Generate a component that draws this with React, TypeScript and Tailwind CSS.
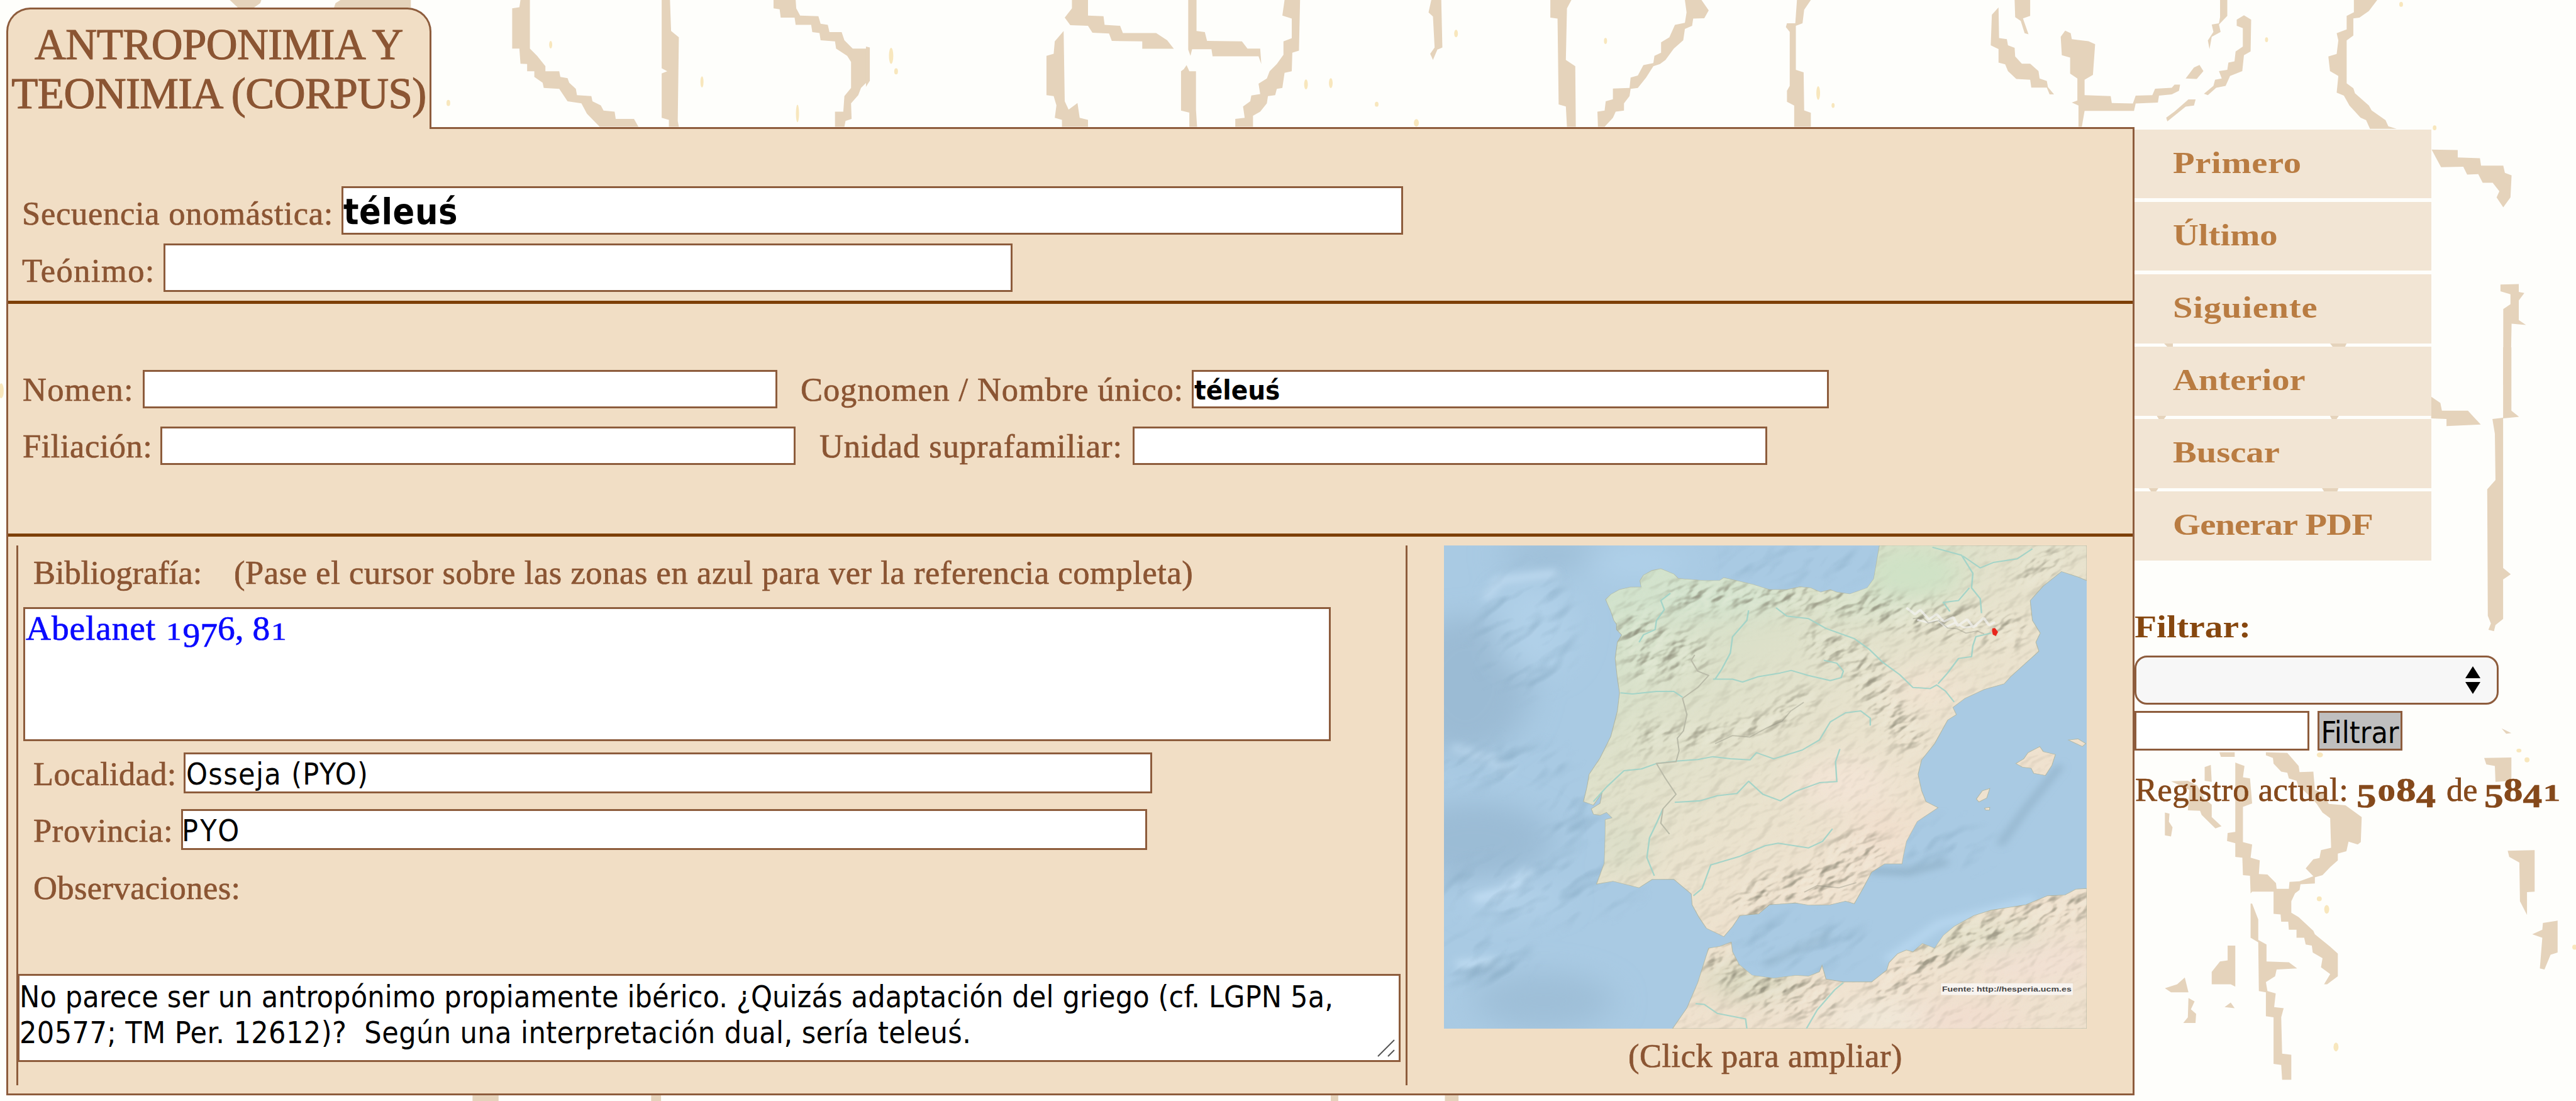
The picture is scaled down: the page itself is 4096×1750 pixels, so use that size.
import React from "react";

const STROKE = "#e5d3bb";

const upperLeft = [
  "415,0 472,0 470,15 458,38 430,38",
  "603,38 606,15 615,0 742,0 742,38",
  "940,0 957,0 957,235 970,270 985,320 985,345 1010,345 1012,372 1025,378 1028,400 1040,430 1042,460 1068,465 1070,490 1085,510 1090,535 1110,540 1112,575 1145,575 1153,613 1083,613 1060,550 1050,500 1025,490 1010,430 982,425 980,400 965,372 965,345 952,345 952,310 940,308 938,235 925,235 925,40 938,35",
  "1195,0 1210,0 1212,150 1226,180 1224,585 1226,613 1208,613 1208,580 1195,570 1195,355 1205,345 1195,330",
  "1397,0 1437,0 1438,40 1445,75 1478,78 1482,115 1495,120 1498,155 1520,155 1525,195 1540,235 1568,235 1568,390 1555,425 1550,460 1537,500 1538,575 1527,585 1525,613 1508,613 1508,540 1523,540 1525,465 1537,425 1537,300 1530,270 1510,235 1508,200 1482,195 1480,160 1467,155 1465,120 1437,120 1435,85 1410,85 1408,45 1397,40",
];
const upperMiddle = [
  "-4,225 3,230 3,390 -4,420",
  "368,0 397,0 397,75 425,78 427,120 455,125 460,160 520,160 540,195 552,236 495,236 495,200 440,198 435,162 405,158 397,125 365,122 355,85 368,40",
  "353,150 355,490 362,530 378,498 382,570 397,580 397,613 350,613 350,580 337,570 340,510 335,465 322,460 322,270 335,260 337,200",
  "578,0 593,0 593,150 608,155 612,198 675,200 685,235 708,235 710,310 705,272 622,272 620,238 585,238 582,270 578,240",
  "570,335 575,315 580,345 592,345 592,530 594,613 580,613 580,545 565,535 565,345",
  "752,0 780,0 778,245 766,255 765,345 752,352 748,425 738,430 735,460 722,465 720,500 708,540 695,560 695,613 663,613 663,575 680,570 677,515 690,490 692,462 708,455 705,405 720,380 725,345 738,310 750,265 750,200 765,185 765,90 748,75",
  "1017,0 1035,0 1037,230 1028,240 1020,290 1015,260 1023,230 1020,80 1012,60",
  "1232,0 1270,0 1262,40 1260,290 1277,320 1278,613 1262,613 1260,515 1247,505 1245,90 1232,85",
  "1475,0 1505,0 1518,50 1510,88 1490,90 1488,125 1475,140 1472,195 1455,235 1440,290 1430,310 1418,320 1405,375 1390,425 1377,430 1375,465 1365,500 1365,535 1350,540 1345,570 1330,613 1318,613 1317,540 1330,535 1332,490 1345,480 1345,428 1375,425 1377,375 1390,365 1400,315 1418,305 1420,270 1432,255 1432,205 1447,180 1457,120 1475,110 1478,60",
];
const upperRight = [
  "165,0 190,0 178,40 175,95 163,105 163,285 177,295 178,450 190,460 190,517 160,517 160,430 147,415 147,370 152,350 152,130 145,110 147,95 162,95",
  "557,0 585,0 585,65 572,75 582,140 575,135 568,85 558,70",
  "528,30 529,155 543,160 545,185 557,195 558,230 570,260 585,260 600,290 602,320 615,330 617,355 628,385 620,385 615,357 587,357 585,325 560,322 545,290 540,262 528,255 528,200 514,185 516,60",
  "640,150 648,125 658,135 660,160 690,168 702,180 698,305 683,325 683,388 730,392 732,420 770,422 775,390 805,388 810,362 840,358 845,345 855,345 853,370 840,385 817,390 815,418 775,422 772,452 683,452 678,517 672,517 672,430 660,418 670,410 670,320 657,300 657,235 642,225",
  "865,320 880,275 890,265 897,290 885,322",
  "927,0 940,0 940,65 925,100 928,130 912,150 908,200 905,165 915,130 912,100 925,95 927,70",
  "957,80 970,62 983,80 982,210 970,225 967,290 945,310 937,350 920,358 905,388 898,382 915,350 918,325 930,320 925,290 940,285 942,255 953,250 955,210 968,190 968,115 957,105",
  "830,480 845,455 860,425 870,405 883,405 880,430 865,435 832,495",
  "1168,0 1210,0 1195,45 1178,72 1167,75 1167,145 1155,165 1155,340 1167,360 1170,380 1195,430 1200,450 1225,490 1230,515 1245,525 1197,525 1190,490 1180,480 1160,430 1150,390 1137,378 1140,310 1125,290 1122,230 1137,220 1140,165 1137,135 1155,120 1155,65 1168,50",
  "1308,610 1355,612 1355,642 1395,645 1397,675 1437,675 1440,705 1452,715 1450,805 1437,845 1425,805 1430,780 1418,745 1400,745 1392,710 1372,712 1365,680 1325,682",
  "1432,1160 1465,1158 1465,1190 1475,1195 1465,1225 1465,1305 1478,1325 1452,1320 1450,1568 1437,1568 1437,1260 1450,1240 1450,1200 1432,1188",
  "826,1400 842,1400 842,1414 832,1414",
  "1125,1400 1155,1400 1152,1414 1130,1414",
];
const middleRight = [
  "1330,0 1357,0 1357,205 1382,225 1330,230 1330,715 1355,735 1330,752 1330,880 1305,900 1300,920 1282,915 1290,895 1280,870 1278,460 1305,430 1303,280 1295,232 1330,228",
  "1095,160 1125,180 1130,205 1215,205 1240,232 1257,250 1145,255 1145,232 1095,230",
  "198,221 230,221 222,232 205,232",
  "764,221 794,221 786,232 770,232",
  "172,456 204,456 196,467 180,467",
  "738,456 792,456 788,467 745,467",
  "1325,1235 1357,1250 1340,1252",
];
const lowerRight = [
  "403,35 453,35 453,55 408,55",
  "555,35 625,38 662,95 665,122 710,120 715,200 745,215 760,262 815,268 868,320 865,430 855,440 825,428 818,470 790,480 790,510 765,540 740,575 715,585 715,612 668,615 665,640 650,655 638,690 638,740 662,760 710,820 715,835 765,890 790,920 790,1020 755,1055 745,1055 765,1010 735,980 740,940 708,915 705,885 685,880 680,850 655,850 655,815 630,815 628,780 605,780 603,748 580,745 580,648 510,648 505,655 503,578 480,575 478,498 455,495 455,435 428,425 430,390 455,385 455,80 485,95 480,145 503,150 510,260 480,275 480,430 510,440 505,498 535,510 532,570 560,572 588,610 590,635 630,635 632,605 665,602 710,580 685,545 710,505 730,500 735,465 768,455 765,325 740,300 720,260 700,230 660,180 655,160 630,150 625,125 605,120 580,85 578,60 555,48",
  "510,700 530,770 530,860 557,880 557,955 630,958 657,985 590,990 585,1020 555,1045 560,1085 587,1095 582,1155 613,1160 605,1200 608,1360 638,1365 638,1475 608,1475 605,1410 580,1405 580,1200 555,1195 555,1090 532,1085 530,870 505,850 505,700",
  "430,885 455,885 455,1065 440,1055 378,1055 378,1000 405,955 430,950",
  "225,1072 265,1055 290,1025 302,1090 245,1090",
  "302,1115 322,1130 310,1165 327,1185 325,1225 285,1225 300,1200",
  "420,1155 440,1135 453,1160",
  "225,300 240,305 238,340 250,365 245,405 225,400",
  "355,100 375,90 378,165 355,160",
  "245,162 300,160 330,180 355,240 378,265 378,320 410,360 390,370 345,310 340,292 300,290 305,200",
  "1268,60 1357,58 1357,160 1305,165 1303,95 1275,88",
  "1345,468 1433,465 1433,648 1408,650 1408,750 1385,690 1383,520 1350,495",
  "1508,775 1508,915 1485,925 1465,990 1450,985 1458,850 1425,835 1458,815 1460,785",
];

function Strokes({ shapes, transform }: { shapes: string[]; transform: string }) {
  return (
    <g transform={transform} fill={STROKE}>
      {shapes.map((p, i) => (
        <polygon key={i} points={p} />
      ))}
    </g>
  );
}

/** Faded rubbing of an Iberian inscription behind the page. */
function Inscription() {
  return (
    <svg className="absolute inset-0 h-full w-full" viewBox="0 0 4154 1775" preserveAspectRatio="none" aria-hidden>
      <Strokes shapes={upperLeft} transform="scale(0.8929 0.3333)" />
      <Strokes shapes={upperMiddle} transform="translate(1400 0) scale(0.8929 0.3333)" />
      <Strokes shapes={upperRight} transform="translate(2750 0) scale(0.8954 0.3954)" />
      <Strokes shapes={middleRight} transform="translate(3380 560) scale(0.4936 0.4975)" />
      <Strokes shapes={lowerRight} transform="translate(3380 1200) scale(0.4936 0.3667)" />
      <g fill={STROKE}>
        <rect x="762" y="1766" width="42" height="9" />
        <rect x="1050" y="1766" width="16" height="9" />
        <rect x="2146" y="1766" width="12" height="9" />
        <rect x="2330" y="1766" width="22" height="9" />
      </g>
      <g fill="#f8e7bd">
        <ellipse cx="1132" cy="132" rx="2.5" ry="9" />
        <ellipse cx="723" cy="166" rx="3" ry="5" />
        <ellipse cx="888" cy="72" rx="2.5" ry="6" />
        <ellipse cx="1286" cy="183" rx="2.5" ry="14" />
        <ellipse cx="1437" cy="90" rx="3.5" ry="13" />
        <ellipse cx="1445" cy="115" rx="3" ry="5" />
        <ellipse cx="2106" cy="136" rx="3" ry="8" />
        <ellipse cx="2146" cy="134" rx="3" ry="8" />
        <ellipse cx="2220" cy="168" rx="3" ry="4" />
        <ellipse cx="2284" cy="198" rx="4" ry="6" />
        <ellipse cx="2348" cy="54" rx="3" ry="6" />
        <ellipse cx="2589" cy="66" rx="2.5" ry="5" />
        <ellipse cx="2932" cy="150" rx="3" ry="11" />
        <ellipse cx="2956" cy="170" rx="2.5" ry="4" />
        <ellipse cx="3655" cy="64" rx="2.5" ry="4" />
        <ellipse cx="3872" cy="7" rx="3" ry="4" />
        <ellipse cx="3926" cy="206" rx="3" ry="4" />
        <ellipse cx="3741" cy="1217" rx="5" ry="4" />
        <ellipse cx="4062" cy="1210" rx="4" ry="3" />
        <ellipse cx="4075" cy="1225" rx="4" ry="4" />
        <ellipse cx="3740" cy="1449" rx="4" ry="4" />
        <ellipse cx="3752" cy="1466" rx="4" ry="7" />
        <ellipse cx="3767" cy="1688" rx="4" ry="7" />
        <ellipse cx="4152" cy="1527" rx="4" ry="4" />
        <ellipse cx="2" cy="630" rx="4" ry="12" />
      </g>
    </svg>
  );
}

const IBERIA =
  "1043,33 1030,125 1015,150 975,167 945,162 930,155 908,162 885,150 860,147 830,155 790,155 750,140 685,122 675,130 640,130 580,124 570,112 540,97 520,102 500,115 492,130 495,148 470,148 445,155 425,168 413,182 425,215 432,240 438,250 438,265 450,280 440,300 435,345 440,400 445,440 440,490 425,560 400,620 375,665 370,700 362,740 385,750 405,715 400,745 380,760 385,775 400,778 415,770 428,785 412,790 412,830 410,910 392,968 430,960 490,978 520,955 570,955 610,995 612,1025 628,1060 645,1090 685,1113 705,1085 722,1055 765,1050 790,1025 850,1020 880,1026 930,1025 965,1015 985,1022 1005,980 1025,935 1055,912 1095,912 1098,890 1105,850 1130,795 1178,757 1150,740 1140,710 1132,665 1140,625 1170,580 1200,515 1220,500 1212,480 1240,455 1285,430 1330,415 1345,395 1410,325 1403,300 1413,275 1395,240 1390,185 1420,145 1462,105 1500,120 1520,130 1520,33";
const AFRICA =
  "567,1367 600,1310 625,1240 650,1145 675,1140 702,1128 705,1155 720,1190 750,1220 800,1228 850,1220 880,1222 905,1210 911,1192 920,1230 960,1238 1025,1238 1060,1205 1065,1185 1085,1160 1105,1150 1120,1155 1142,1132 1170,1145 1190,1110 1215,1085 1260,1055 1300,1040 1380,1025 1430,1000 1470,998 1495,982 1520,980 1520,1367";
const MALLORCA = "1357,635 1375,622 1385,605 1412,588 1420,602 1448,610 1440,640 1425,668 1398,662 1392,648 1372,645";
const ISLETS = ["1478,570 1500,567 1518,580 1510,588", "1266,733 1280,710 1297,704 1290,730 1272,741", "1285,758 1297,756 1296,764 1287,763"];

function Land({ fill, stroke }: { fill: string; stroke?: string }) {
  return (
    <g fill={fill} stroke={stroke} strokeWidth={1.5}>
      <polygon points={IBERIA} />
      <polygon points={AFRICA} />
      <polygon points={MALLORCA} />
      {ISLETS.map((p) => (
        <polygon key={p} points={p} />
      ))}
    </g>
  );
}

function IberiaMap() {
  return (
    <svg className="block h-[768px] w-[1022px]" viewBox="41 33 1479 1334" preserveAspectRatio="none" role="img" aria-label="Mapa">
      <defs>
        <clipPath id="land">
          <polygon points={IBERIA} />
          <polygon points={AFRICA} />
          <polygon points={MALLORCA} />
          {ISLETS.map((p) => (
            <polygon key={p} points={p} />
          ))}
        </clipPath>
        <linearGradient id="soil" gradientUnits="userSpaceOnUse" x1="420" y1="150" x2="1020" y2="900">
          <stop offset="0" stopColor="#cfe2cb" />
          <stop offset="0.35" stopColor="#dce0c9" />
          <stop offset="0.7" stopColor="#e9e2cd" />
          <stop offset="1" stopColor="#efe1ce" />
        </linearGradient>
        <filter id="soft" x="-50%" y="-50%" width="200%" height="200%">
          <feGaussianBlur stdDeviation="36" />
        </filter>
        <filter id="haze" x="-50%" y="-50%" width="200%" height="200%">
          <feGaussianBlur stdDeviation="10" />
        </filter>
        <filter id="blurMask" x="-50%" y="-50%" width="200%" height="200%">
          <feGaussianBlur stdDeviation="20" />
        </filter>
        <filter id="shade" x="0" y="0" width="100%" height="100%" colorInterpolationFilters="sRGB">
          <feTurbulence type="fractalNoise" baseFrequency="0.018 0.034" numOctaves="3" seed="7" />
          <feColorMatrix values="0 0 0 0 0  0 0 0 0 0  0 0 0 0 0  1 0 0 0 0" />
          <feGaussianBlur stdDeviation="1.5" />
          <feDiffuseLighting surfaceScale="14" lightingColor="#fff">
            <feDistantLight azimuth="250" elevation="45" />
          </feDiffuseLighting>
          <feColorMatrix values="0 0 0 0 0.5  0 0 0 0 0.49  0 0 0 0 0.42  -1.5 0 0 0 1.05" />
        </filter>
        <filter id="light" x="0" y="0" width="100%" height="100%" colorInterpolationFilters="sRGB">
          <feTurbulence type="fractalNoise" baseFrequency="0.018 0.034" numOctaves="3" seed="7" />
          <feColorMatrix values="0 0 0 0 0  0 0 0 0 0  0 0 0 0 0  1 0 0 0 0" />
          <feGaussianBlur stdDeviation="1.5" />
          <feDiffuseLighting surfaceScale="14" lightingColor="#fff">
            <feDistantLight azimuth="250" elevation="45" />
          </feDiffuseLighting>
          <feColorMatrix values="0 0 0 0 0.97  0 0 0 0 0.97  0 0 0 0 0.92  2.2 0 0 0 -1.6" />
        </filter>
        <filter id="swell" x="0" y="0" width="100%" height="100%" colorInterpolationFilters="sRGB">
          <feTurbulence type="fractalNoise" baseFrequency="0.007 0.014" numOctaves="3" seed="21" />
          <feColorMatrix values="0 0 0 0 0  0 0 0 0 0  0 0 0 0 0  1 0 0 0 0" />
          <feGaussianBlur stdDeviation="4" />
          <feDiffuseLighting surfaceScale="18" lightingColor="#fff">
            <feDistantLight azimuth="250" elevation="45" />
          </feDiffuseLighting>
          <feColorMatrix values="0 0 0 0 0.5  0 0 0 0 0.64  0 0 0 0 0.74  -1.5 0 0 0 1.08" />
        </filter>
        <mask id="ranges" maskUnits="userSpaceOnUse" x="41" y="33" width="1479" height="1334">
          <rect x="41" y="33" width="1479" height="1334" fill="#333" />
          <g filter="url(#blurMask)" fill="none" stroke="#fff" strokeLinecap="round">
            <path d="M490 270 L530 350 L590 330" strokeWidth="110" />
            <path d="M580 180 L700 170 L900 180 L1010 200" strokeWidth="70" />
            <path d="M1060 215 L1200 240 L1340 270" strokeWidth="90" />
            <path d="M500 560 L650 560 L760 540 L870 460" strokeWidth="50" />
            <path d="M900 300 L1000 350 L1060 480 L1110 560" strokeWidth="80" />
            <path d="M1000 880 L900 970 L760 1010" strokeWidth="110" />
            <path d="M690 1180 L800 1270 L900 1280" strokeWidth="100" />
            <path d="M1060 1250 L1250 1110 L1500 1020" strokeWidth="80" />
            <path d="M1380 120 L1450 60" strokeWidth="50" />
          </g>
          <g filter="url(#blurMask)" fill="#000">
            <ellipse cx="1120" cy="110" rx="80" ry="60" />
            <ellipse cx="780" cy="310" rx="90" ry="60" />
          </g>
        </mask>
        <mask id="deep" maskUnits="userSpaceOnUse" x="41" y="33" width="1479" height="1334">
          <g filter="url(#blurMask)" fill="#fff">
            <ellipse cx="230" cy="270" rx="110" ry="170" />
            <ellipse cx="170" cy="640" rx="160" ry="60" />
            <ellipse cx="330" cy="780" rx="60" ry="80" />
            <ellipse cx="260" cy="980" rx="220" ry="90" />
            <ellipse cx="130" cy="1180" rx="110" ry="70" />
            <ellipse cx="850" cy="80" rx="170" ry="50" />
            <ellipse cx="870" cy="1130" rx="150" ry="70" />
            <ellipse cx="1190" cy="860" rx="110" ry="60" />
          </g>
        </mask>
      </defs>
      <rect x="41" y="33" width="1479" height="1334" fill="#a9cae3" />
      <g filter="url(#soft)">
        <ellipse cx="90" cy="420" rx="150" ry="190" fill="#9bbbd4" />
        <ellipse cx="110" cy="850" rx="180" ry="110" fill="#9bbcd5" />
        <ellipse cx="300" cy="60" rx="130" ry="50" fill="#9fbfd8" />
        <ellipse cx="270" cy="1290" rx="160" ry="80" fill="#9fbfd8" />
        <ellipse cx="250" cy="260" rx="90" ry="130" fill="#b0d0e8" />
        <ellipse cx="480" cy="80" rx="120" ry="40" fill="#b0d1ea" />
        <ellipse cx="200" cy="1010" rx="110" ry="40" fill="#b2d1e9" />
      </g>
      <g filter="url(#haze)" fill="none">
        <path d="M1320 860 L1380 760 L1460 640" stroke="#8eafc6" strokeWidth="12" />
        <path d="M1020 930 L1110 935 L1200 905" stroke="#90b1c8" strokeWidth="16" />
        <path d="M780 1190 L870 1140 L930 1105" stroke="#92b2c8" strokeWidth="10" />
        <path d="M1060 1180 L1180 1080 L1400 1010" stroke="#b6d6ee" strokeWidth="24" />
        <path d="M110 1010 L180 990 L240 930" stroke="#c0dcf2" strokeWidth="24" />
        <path d="M135 180 L170 130 L300 110" stroke="#bcd8ee" strokeWidth="22" />
        <path d="M70 1190 L160 1180" stroke="#bcd9ef" strokeWidth="26" />
        <path d="M60 590 L140 620 L200 660" stroke="#b2d0e7" strokeWidth="26" />
        <path d="M90 1220 L180 1200" stroke="#92b3cc" strokeWidth="10" />
      </g>
      <g mask="url(#deep)">
        <g transform="rotate(-38 780 700)">
          <rect x="-300" y="-400" width="2160" height="2200" filter="url(#swell)" opacity="0.7" />
        </g>
      </g>
      <Land fill="url(#soil)" stroke="#b0b7a4" />
      <g clipPath="url(#land)">
        <g filter="url(#soft)">
          <ellipse cx="1120" cy="110" rx="120" ry="80" fill="#cfe2c6" />
          <ellipse cx="620" cy="170" rx="220" ry="50" fill="#d2e2cc" />
          <ellipse cx="1000" cy="190" rx="120" ry="40" fill="#d5e0c8" />
          <ellipse cx="1150" cy="430" rx="80" ry="60" fill="#f1e3d1" />
          <ellipse cx="960" cy="690" rx="110" ry="70" fill="#f3e4d5" />
          <ellipse cx="1050" cy="830" rx="80" ry="80" fill="#f0dfcd" />
          <ellipse cx="450" cy="860" rx="60" ry="90" fill="#dbdec8" />
          <ellipse cx="1400" cy="1180" rx="140" ry="60" fill="#f2e0d3" />
          <ellipse cx="1150" cy="1340" rx="240" ry="40" fill="#f2dccf" />
          <ellipse cx="740" cy="1230" rx="120" ry="60" fill="#dad8c0" />
          <ellipse cx="1250" cy="1110" rx="180" ry="40" fill="#e0dec6" />
          <ellipse cx="1040" cy="1340" rx="120" ry="40" fill="#f1e9da" />
        </g>
        <g mask="url(#ranges)">
          <g transform="rotate(-35 780 700)">
            <rect x="-300" y="-400" width="2160" height="2200" filter="url(#shade)" opacity="0.7" />
            <rect x="-300" y="-400" width="2160" height="2200" filter="url(#light)" opacity="0.5" />
          </g>
        </g>
        <g fill="none" stroke="#f4f4f2" strokeWidth="6" strokeLinejoin="bevel" opacity="0.7">
          <path d="M1105 205 l20 18 l12 -12 l20 26 l18 -14 l16 20 l22 -12 l10 24 l22 -18 l14 22 l24 -26 l12 20 l14 -8" />
          <path d="M1130 238 l26 8 l20 -8 l20 20 l22 -12 l20 14 l30 -6" strokeWidth="5" />
        </g>
        <g fill="none" stroke="#8c8b7d" strokeWidth="3" opacity="0.4">
          <path d="M1120 235 l22 -4 l14 16 l24 -6 l20 20 l22 2 l20 12 l26 -6 l16 8" />
          <path d="M665 580 l40 -22 l40 4 l40 -26 l34 -18 l20 -28 l30 -24" />
          <path d="M870 990 l30 -18 l50 6 l40 -14" />
        </g>
      </g>
      <g fill="none" stroke="#9ed3c8" strokeWidth="3.5" strokeLinejoin="round" opacity="0.9">
        <path d="M562 165 L540 185 L548 210 L530 240 L527 265 L500 280 L490 300" />
        <path d="M742 212 L738 240 L705 285 L700 330 L680 375 L665 402" />
        <path d="M447 440 L475 443 L530 436 L570 436 L590 452" />
        <path d="M660 402 L705 402 L728 410 L765 395 L815 385 L840 378 L880 392 L930 406 L955 398 L960 380 L945 358 L915 350" />
        <path d="M805 205 L830 228 L880 235 L920 262 L985 290 L1020 320 L1050 355 L1090 390 L1120 425 L1160 428 L1175 418 L1195 435 L1215 465" />
        <path d="M1300 275 L1265 285 L1258 310 L1255 340 L1225 345 L1200 385 L1178 415" />
        <path d="M385 740 L415 700 L455 655 L495 650 L530 635 L580 628 L625 624 L660 616 L700 622 L745 625 L760 605 L800 622 L865 598 L905 570 L930 520 L965 495 L1000 490 L1022 510 L1022 530" />
        <path d="M572 742 L630 738 L670 724 L715 718 L742 684 L775 720 L815 738 L850 712 L905 688 L945 685 L942 630 L952 595" />
        <path d="M525 945 L508 895 L514 840 L530 800 L545 760" />
        <path d="M615 1000 L635 980 L655 915 L720 892 L780 862 L810 855 L880 868 L912 850 L935 815" />
        <path d="M1165 38 L1232 60 L1258 110 L1255 150 L1275 180 L1278 220" />
        <path d="M1235 62 L1275 95 L1305 80 L1360 70 L1395 42" />
        <path d="M1250 150 L1225 185 L1190 190 L1205 215" />
        <path d="M875 1367 L900 1315 L940 1260 L960 1240" />
        <path d="M620 1298 L640 1300 L670 1325 L735 1340 L738 1367" />
      </g>
      <g fill="none" stroke="#b9baa8" strokeWidth="3">
        <path d="M618 335 L610 350 L625 380 L650 392 L625 425 L590 455 L600 500 L592 545 L578 565 L582 600 L575 630 L530 635 L550 675 L575 720 L545 760 L540 800 L560 830" />
      </g>
      <path d="M1303 262 l6 -1 l7 11 l-5 11 l-7 -4 l-2 -10 z" fill="#e8251c" />
      <rect x="1185" y="1242" width="303" height="32" fill="#f8f4f0" />
      <text x="1187" y="1264" className="font-['Liberation_Sans'] font-bold" fontSize="19" fill="#444" textLength="298" lengthAdjust="spacingAndGlyphs">
        Fuente: http://hesperia.ucm.es
      </text>
    </svg>
  );
}

/** Text figures: 0-2 sit at x-height, 3-5, 7 and 9 hang below the baseline. */
function OldStyle({ value }: { value: string }) {
  return (
    <>
      {value.split("").map((d, i) =>
        "012".includes(d) ? (
          <span key={i} className="inline-block w-[0.5em] text-center leading-none">
            <span className="inline-block scale-x-[1.2] text-[0.74em] leading-none">{d}</span>
          </span>
        ) : "34579".includes(d) ? (
          <span key={i} className="inline-block w-[0.5em] text-center align-[-0.19em] leading-none">{d}</span>
        ) : (
          <span key={i} className="inline-block w-[0.5em] text-center leading-none">{d}</span>
        ),
      )}
    </>
  );
}

function Label({ className, children }: { className: string; children: React.ReactNode }) {
  return <label className={`shrink-0 whitespace-nowrap text-[52.5px] ${className}`}>{children}</label>;
}

function Field({ className, children }: { className: string; children?: React.ReactNode }) {
  return (
    <div className={`shrink-0 whitespace-nowrap border-[3px] border-[#8d5c3c] bg-white font-['DejaVu_Sans_Condensed','DejaVu_Sans',sans-serif] text-black [-webkit-text-stroke:0] ${className}`}>
      {children}
    </div>
  );
}

const MENU: [string, string][] = [
  ["Primero", "tracking-[0.012em]"],
  ["Último", "tracking-normal"],
  ["Siguiente", "tracking-[0.014em]"],
  ["Anterior", "tracking-normal"],
  ["Buscar", "tracking-normal"],
  ["Generar PDF", "tracking-[-0.015em]"],
];

export default function App() {
  return (
    <div className="relative h-[1750px] w-[4096px] overflow-hidden bg-[#fefefb] font-['Liberation_Serif',serif] text-[#8b5533]">
      <Inscription />
      <div className="relative flex items-start pl-[10px] pt-[12px]">
        <main className="w-[3384px] shrink-0 [-webkit-text-stroke:0.7px]">
          <h1 className="relative z-10 -mb-[3px] h-[193px] w-[676px] whitespace-nowrap rounded-t-[38px] border-x-[3px] border-t-[3px] border-[#8d5c3c] bg-[#f1dec5] pt-[17px] text-center text-[69px] leading-[78px] tracking-[-0.008em] [-webkit-text-stroke:1.2px]">
            ANTROPONIMIA Y
            <br />
            TEONIMIA (CORPUS)
          </h1>

          <div className="border-[3px] border-[#8d5c3c] bg-[#f1dec5]">
            <section className="flex h-[278px] flex-col gap-[14px] border-b-[5px] border-[#7d3f07] pl-[22px] pt-[91px]">
              <div className="flex h-[77px]">
                <Label className="w-[508px] leading-[86px] tracking-[0.014em]">Secuencia onomástica:</Label>
                <Field className="w-[1688px] text-[57px] font-bold leading-[75px] tracking-[0.01em]">téleuś</Field>
              </div>
              <div className="flex h-[77px]">
                <Label className="w-[225px] leading-[86px] tracking-[0.027em]">Teónimo:</Label>
                <Field className="w-[1350px]" />
              </div>
            </section>

            <section className="flex h-[370px] flex-col gap-[29px] border-b-[5px] border-[#7d3f07] pl-[23px] pt-[105px]">
              <div className="flex h-[61px]">
                <Label className="w-[191px] leading-[62px] tracking-[0.025em]">Nomen:</Label>
                <Field className="w-[1009px]" />
                <Label className="ml-[37px] w-[622px] leading-[62px] tracking-[0.017em]">Cognomen / Nombre único:</Label>
                <Field className="w-[1013px] pl-[1px] text-[43.5px] font-bold leading-[58px]">téleuś</Field>
              </div>
              <div className="flex h-[61px]">
                <Label className="w-[219px] leading-[62px] tracking-[0.01em]">Filiación:</Label>
                <Field className="w-[1010px]" />
                <Label className="ml-[38px] w-[498px] leading-[62px] tracking-[0.018em]">Unidad suprafamiliar:</Label>
                <Field className="w-[1009px]" />
              </div>
            </section>

            <section className="flex h-[885px] pl-[13px] pt-[14px]">
              <div className="h-[858px] w-[2212px] shrink-0 border-x-[3px] border-[#8d5c3c]">
                <div className="flex h-[98px] pl-[24px]">
                  <Label className="w-[319px] leading-[87px] tracking-normal">Bibliografía:</Label>
                  <span className="whitespace-nowrap text-[52.5px] leading-[87px] tracking-[0.011em]">
                    (Pase el cursor sobre las zonas en azul para ver la referencia completa)
                  </span>
                </div>
                <div className="ml-[8px] h-[213px] w-[2079px] whitespace-nowrap border-[3px] border-[#8d5c3c] bg-white pl-[1px] text-[55.5px] leading-[62px] text-[#0a0aff]">
                  <span className="tracking-[0.015em]">Abelanet </span>
                  <OldStyle value="1976" />, <OldStyle value="81" />
                </div>
                <div className="mt-[18px] flex h-[65px] pl-[24px]">
                  <Label className="w-[239px] leading-[69px] tracking-[0.006em]">Localidad:</Label>
                  <Field className="w-[1540px] pl-[1px] text-[48px] leading-[63px] tracking-[0.028em]">Osseja (PYO)</Field>
                </div>
                <div className="mt-[25px] flex h-[65px] pl-[24px]">
                  <Label className="w-[235px] leading-[69px] tracking-[0.012em]">Provincia:</Label>
                  <Field className="w-[1536px] indent-[-2px] text-[48px] leading-[63px] tracking-[0.09em]">PYO</Field>
                </div>
                <div className="h-[197px] pl-[24px]">
                  <Label className="leading-[120px] tracking-[0.008em]">Observaciones:</Label>
                </div>
                <div className="relative -ml-[1px] h-[140px] w-[2199px] whitespace-pre border-[3px] border-[#8d5c3c] bg-white pt-[5px] font-['DejaVu_Sans_Condensed','DejaVu_Sans',sans-serif] text-[48px] leading-[57.3px] text-black [-webkit-text-stroke:0]">
                  <span className="tracking-[0.0025em]">No parece ser un antropónimo propiamente ibérico. ¿Quizás adaptación del griego (cf. LGPN 5a,</span>
                  <br />
                  <span className="tracking-[0.008em]">{"20577; TM Per. 12612)?  Según una interpretación dual, sería teleuś."}</span>
                  <svg className="absolute bottom-[5px] right-[6px] h-[28px] w-[28px]" viewBox="0 0 28 28" stroke="#555" strokeWidth="2">
                    <path d="M1 27 L27 1 M17 27 L27 17" />
                  </svg>
                </div>
              </div>

              <div className="ml-[58px] w-[1022px] shrink-0">
                <IberiaMap />
                <p className="text-center text-[52.5px] leading-[86px] tracking-[0.01em]">(Click para ampliar)</p>
              </div>
            </section>
          </div>
        </main>

        <aside className="mt-[193.5px] w-[702px] shrink-0">
          <nav className="flex w-[472px] flex-col gap-[5.4px]">
            {MENU.map(([name, tracking]) => (
              <a key={name} className="block h-[109.8px] whitespace-nowrap bg-[#f2e5d4] pl-[61px] text-[49px] font-bold leading-[106px] text-[#b97c42]">
                <span className={`inline-block origin-left scale-x-[1.155] ${tracking}`}>{name}</span>
              </a>
            ))}
          </nav>
          <div className="pt-[60px] text-[50px] font-bold leading-[91px] text-[#86470f]">
            <span className="inline-block origin-left scale-x-[1.15]">Filtrar:</span>
          </div>
          <div className="flex h-[78px] w-[579px] items-center justify-end rounded-[20px] border-[3px] border-[#8d5c3c] bg-[#f7f7f7] pr-[26px]">
            <svg className="h-[44px] w-[24px]" viewBox="0 0 24 44">
              <path d="M12 0 L24 19 H0 Z M0 25 H24 L12 44 Z" fill="#000" />
            </svg>
          </div>
          <div className="mt-[10px] flex h-[63px] gap-[13px]">
            <Field className="w-[278px]" />
            <button className="w-[135px] whitespace-nowrap border-[3px] border-[#8d5c3c] bg-[#bfbfbf] text-center font-['DejaVu_Sans_Condensed','DejaVu_Sans',sans-serif] text-[48px] leading-[63px] text-black">
              <span className="-mx-2">Filtrar</span>
            </button>
          </div>
          <p className="flex whitespace-nowrap pl-[1px] text-[52.5px] leading-[125px] text-[#85491b] [-webkit-text-stroke:0.7px]">
            <span className="w-[352px] tracking-[0.01em]">Registro actual:</span>
            <b className="w-[143px]">
              <span className="inline-block origin-left scale-x-[1.2]">
                <OldStyle value="5084" />
              </span>
            </b>
            <span className="w-[60px]">de</span>
            <b>
              <span className="inline-block origin-left scale-x-[1.17]">
                <OldStyle value="5841" />
              </span>
            </b>
          </p>
        </aside>
      </div>
    </div>
  );
}
